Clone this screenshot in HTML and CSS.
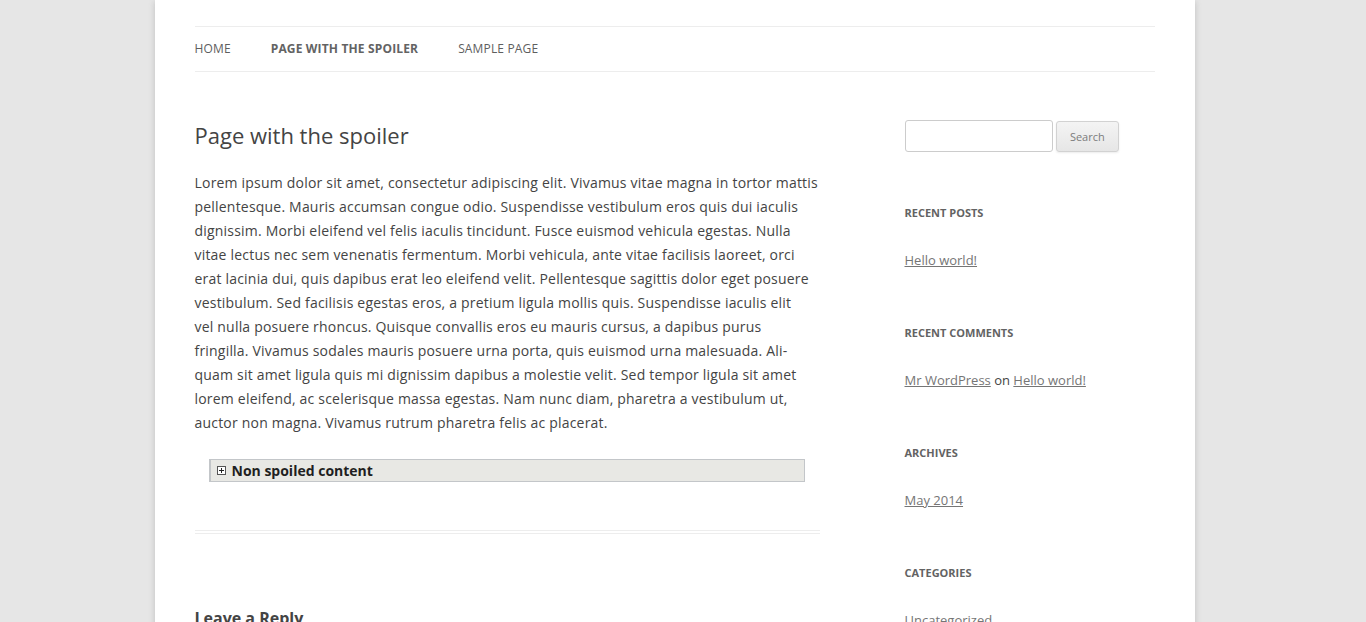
FILE: index.html
```html
<!DOCTYPE html>
<html lang="en">
<head>
<meta charset="utf-8">
<title>Page with the spoiler</title>
<link rel="stylesheet" href="styles.css">
</head>
<body>
<div class="site">
  <header class="site-header">
    <nav class="main-nav">
      <ul class="nav-menu">
        <li><a href="#">Home</a></li>
        <li class="current"><a href="#">Page with the spoiler</a></li>
        <li><a href="#">Sample Page</a></li>
      </ul>
    </nav>
  </header>
  <div class="main">
    <div class="content">
      <article class="page">
        <h1 class="entry-title">Page with the spoiler</h1>
        <div class="entry-content">
          <p>Lorem ipsum dolor sit amet, consectetur adipiscing elit. Vivamus vitae magna in tortor mattis<br>
pellentesque. Mauris accumsan congue odio. Suspendisse vestibulum eros quis dui iaculis<br>
dignissim. Morbi eleifend vel felis iaculis tincidunt. Fusce euismod vehicula egestas. Nulla<br>
vitae lectus nec sem venenatis fermentum. Morbi vehicula, ante vitae facilisis laoreet, orci<br>
erat lacinia dui, quis dapibus erat leo eleifend velit. Pellentesque sagittis dolor eget posuere<br>
vestibulum. Sed facilisis egestas eros, a pretium ligula mollis quis. Suspendisse iaculis elit<br>
vel nulla posuere rhoncus. Quisque convallis eros eu mauris cursus, a dapibus purus<br>
fringilla. Vivamus sodales mauris posuere urna porta, quis euismod urna malesuada. Ali-<br>
quam sit amet ligula quis mi dignissim dapibus a molestie velit. Sed tempor ligula sit amet<br>
lorem eleifend, ac scelerisque massa egestas. Nam nunc diam, pharetra a vestibulum ut,<br>
auctor non magna. Vivamus rutrum pharetra felis ac placerat.</p>
          <div class="spoiler">
            <div class="spoiler-head">
              <span class="spoiler-icon"></span>
              <span class="spoiler-title">Non spoiled content</span>
            </div>
          </div>
        </div>
      </article>
      <section class="respond">
        <h3 class="reply-title">Leave a Reply</h3>
        <p class="comment-notes">Your email address will not be published. Required fields are marked *</p>
        <p class="field"><label>Name *</label><input type="text" class="text-input"></p>
        <p class="field"><label>Email *</label><input type="text" class="text-input"></p>
        <p class="field"><label>Website</label><input type="text" class="text-input"></p>
      </section>
    </div>
    <aside class="sidebar">
      <div class="widget search-widget">
        <form class="searchform">
          <input type="text" class="search-input"> <button type="button" class="search-btn">Search</button>
        </form>
      </div>
      <div class="widget">
        <h3 class="widget-title">Recent Posts</h3>
        <ul><li><a href="#">Hello world!</a></li></ul>
      </div>
      <div class="widget">
        <h3 class="widget-title">Recent Comments</h3>
        <ul><li><a href="#">Mr WordPress</a> on <a href="#">Hello world!</a></li></ul>
      </div>
      <div class="widget">
        <h3 class="widget-title">Archives</h3>
        <ul><li><a href="#">May 2014</a></li></ul>
      </div>
      <div class="widget">
        <h3 class="widget-title">Categories</h3>
        <ul><li><a href="#">Uncategorized</a></li></ul>
      </div>
      <div class="widget">
        <h3 class="widget-title">Meta</h3>
        <ul><li><a href="#">Log in</a></li><li><a href="#">Entries RSS</a></li></ul>
      </div>
    </aside>
  </div>
</div>
</body>
</html>
```
FILE: styles.css
```css
html {
  background: #e6e6e6;
}
html, body {
  margin: 0;
  padding: 0;
}
body {
  /* room of the window's vertical scrollbar */
  margin-right: 17px;
  font-family: "Open Sans", "Liberation Sans", sans-serif;
  font-size: 14px;
  line-height: 24px;
  color: #444;
}
a {
  color: #21759b;
}
.site {
  max-width: 960px;
  margin: 0 auto 48px;
  padding: 0 40px;
  background: #fff;
  box-shadow: 0 2px 6px rgba(100, 100, 100, 0.3);
}
.site-header {
  padding: 26px 0 24px;
}
.nav-menu {
  list-style: none;
  margin: 0;
  padding: 0;
  display: flex;
  border-top: 1px solid #ededed;
  border-bottom: 1px solid #ededed;
}
.nav-menu li {
  margin-right: 40px;
}
.nav-menu a {
  display: block;
  font-size: 12px;
  line-height: 44px;
  letter-spacing: 0.15px;
  text-transform: uppercase;
  text-decoration: none;
  color: #5e5e5e;
}
.nav-menu .current a {
  font-weight: bold;
  color: #636363;
}
.main {
  display: flex;
  justify-content: space-between;
  align-items: flex-start;
}
.content {
  width: 625px;
}
.page {
  border-bottom: 4px double #ededed;
  padding-bottom: 24px;
  margin-bottom: 72px;
}
.entry-title {
  margin: 27px 0 24px;
  font-size: 22px;
  line-height: 24px;
  font-weight: normal;
  color: #444;
}
.entry-content p {
  margin: 0 0 24px;
  letter-spacing: 0.2px;
  white-space: nowrap;
}
.spoiler {
  margin: 0 15px 24px 14px;
}
.spoiler-head {
  display: flex;
  align-items: center;
  height: 21px;
  background: #e8e8e4;
  border: 1px solid #c3c6c9;
  border-left-width: 2px;
  padding-left: 6px;
}
.spoiler-icon {
  position: relative;
  width: 7px;
  height: 7px;
  border: 1px solid #555;
  background: #fff;
  margin-right: 6px;
}
.spoiler-icon::before,
.spoiler-icon::after {
  content: "";
  position: absolute;
  background: #222;
}
.spoiler-icon::before {
  left: 1px;
  top: 3px;
  width: 5px;
  height: 1px;
}
.spoiler-icon::after {
  left: 3px;
  top: 1px;
  width: 1px;
  height: 5px;
}
.spoiler-title {
  font-weight: bold;
  font-size: 14px;
  line-height: 21px;
  color: #1f1f22;
}
.reply-title {
  margin: 0;
  font-size: 16px;
  line-height: 24px;
  font-weight: bold;
  color: #444;
}
.comment-notes {
  margin: 24px 0;
  font-size: 13px;
  color: #757575;
}
.field label {
  display: block;
  font-size: 13px;
}
.text-input {
  width: 300px;
  padding: 6px;
  border: 1px solid #ccc;
  border-radius: 3px;
}
.sidebar {
  width: 250px;
  padding-top: 24px;
}
.widget {
  margin-bottom: 49px;
}
.searchform {
  margin: 0;
  font-size: 13px;
  line-height: 24px;
}
.search-input {
  box-sizing: border-box;
  width: 148px;
  height: 32px;
  padding: 6px;
  border: 1px solid #ccc;
  border-radius: 3px;
  font-family: inherit;
  font-size: 13px;
  vertical-align: top;
  margin: 0;
}
.search-btn {
  box-sizing: border-box;
  height: 31px;
  margin: 1px 0 0;
  padding: 0 13px;
  font-family: inherit;
  font-size: 11px;
  color: #7c7c7c;
  background: linear-gradient(#f4f4f4, #e6e6e6);
  border: 1px solid #d2d2d2;
  border-radius: 3px;
  box-shadow: 0 1px 2px rgba(64, 64, 64, 0.1);
  vertical-align: top;
}
.widget-title {
  margin: 0 0 23px;
  font-size: 11px;
  line-height: 24px;
  font-weight: bold;
  text-transform: uppercase;
  color: #636363;
}
.widget ul {
  list-style: none;
  margin: 0;
  padding: 0;
}
.widget li {
  font-size: 13px;
  line-height: 24px;
}
.widget a {
  color: #757575;
}
```
